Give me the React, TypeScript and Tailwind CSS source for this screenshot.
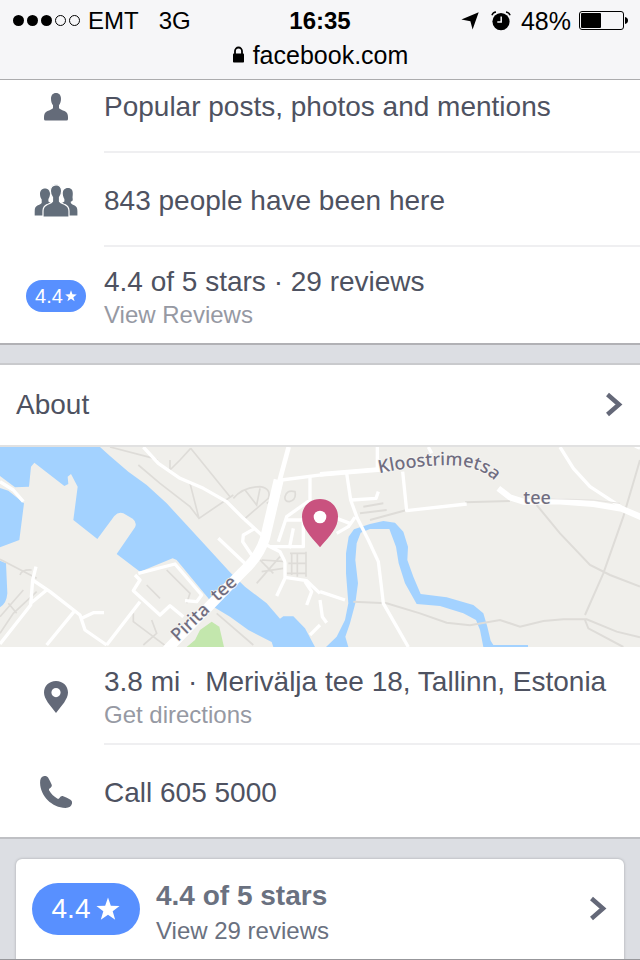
import type { ReactNode } from "react";

function StatusBar() {
  return (
    <header className="shrink-0 h-20 bg-[#f6f6f8] border-b border-[#acacae] text-black text-[25px] leading-[26px]">
      <div className="grid grid-cols-[1fr_auto_1fr] items-center h-[42px] px-3">
        <div className="flex items-center">
          <svg width="70" height="14" viewBox="0 0 70 14" aria-hidden="true">
            <circle cx="6.5" cy="6.5" r="5.5" />
            <circle cx="20.5" cy="6.5" r="5.5" />
            <circle cx="34.5" cy="6.5" r="5.5" />
            <circle cx="48.5" cy="6.5" r="5" fill="none" stroke="#000" />
            <circle cx="62.5" cy="6.5" r="5" fill="none" stroke="#000" />
          </svg>
          <span className="ml-1.5 text-2xl leading-[26px]">EMT</span>
          <span className="ml-5 text-2xl leading-[26px]">3G</span>
        </div>
        <time className="text-2xl leading-[26px] font-bold">16:35</time>
        <div className="flex items-center justify-end">
          <svg width="18" height="18" viewBox="0 0 18 18" aria-hidden="true">
            <path d="M17.7.3 11.6 17.6 9.4 9.2.4 7.6z" />
          </svg>
          <svg className="ml-3" width="20" height="20" viewBox="0 0 20 20" aria-hidden="true">
            <circle cx="10" cy="10.6" r="8.6" />
            <path d="M10.2 5.6v5.4H6.3" fill="none" stroke="#f6f6f8" strokeWidth="1.5" />
            <path d="M.9 4.2Q2 1.4 5 1.1M19.1 4.2Q18 1.4 15 1.1" fill="none" stroke="#000" strokeWidth="1.5" />
          </svg>
          <span className="ml-[10px]">48%</span>
          <svg className="ml-2" width="49" height="20" viewBox="0 0 49 20" aria-hidden="true">
            <rect x=".5" y=".5" width="44" height="18" rx="2.5" fill="none" stroke="#000" />
            <rect x="2" y="2" width="20" height="15" rx="1" />
            <path d="M46 6q3 .8 3 3.500t-3 3.500z" />
          </svg>
        </div>
      </div>
      <div className="flex items-center justify-center gap-2 h-[26px]">
        <svg width="13" height="18" viewBox="0 0 13 18" aria-hidden="true">
          <rect x="1" y="7.5" width="11" height="9" rx=".8" />
          <path d="M3 8V5a3.500 3.500 0 0 1 7 0v3" fill="none" stroke="#000" strokeWidth="1.8" />
        </svg>
        <span>facebook.com</span>
      </div>
    </header>
  );
}

function Star({ className }: { className: string }) {
  return (
    <svg className={className} viewBox="0 0 22 22" fill="#fff" aria-hidden="true">
      <path d="m11 .5 2.600 7.500 8 .2-6.300 4.900 2.300 7.700L11 16.200l-6.600 4.600 2.300-7.700L.4 8.200l8-.2z" />
    </svg>
  );
}

function PersonIcon() {
  return (
    <svg width="26" height="30" viewBox="0 0 26 30" fill="#646b79" aria-hidden="true">
      <path d="M13 1c3.300 0 5 2.300 5 5.800 0 2.900-.8 4.900-2 6.400v3c1.200 1.300 3.500 1.800 5.500 2.900 2.400 1.300 3.500 3 3.500 6V27q0 1.500-1.500 1.500h-21Q1 28.500 1 27v-1.900c0-3 1.100-4.700 3.500-6 2-1.100 4.300-1.600 5.500-2.900v-3c-1.200-1.500-2-3.500-2-6.400C8 3.300 9.700 1 13 1z" />
    </svg>
  );
}

function PeopleIcon() {
  return (
    <svg width="44" height="34" viewBox="0 0 44 34" fill="#636e7b" aria-hidden="true">
      <path d="M11 4.500c3 0 5 2.200 5 5.300 0 2.300-.8 4-1.600 5.200v2.500l5 3v11H.7v-4.300c0-3 .8-4.500 2.700-5.600 1.500-.9 3.600-1.200 4.300-2.600v-3.600C6.600 14 6 12.300 6 10c0-3.300 2-5.500 5-5.500zM34 4c-3.500 0-5.200 2.300-5.200 5.500 0 2.300.8 4.200 1.600 5.500v2.500l-5 3v11h18v-4.300c0-3-.8-4.500-2.700-5.600-1.500-.9-3.200-1.200-3.900-2.600v-1.500c2 0 2.200-1.500 1.800-3.500-.2-1 .2-2.500.2-4.500C38.800 6.300 37.500 4 34 4z" />
      <path d="M22 .8c3.800 0 5.600 2.700 5.600 6.200 0 3-.9 4.800-2.100 6.300v4c1.100 1.700 3.400 2.300 5.500 3.300 3 1.500 4 3.100 4 6.300v6.200H9v-6.200c0-3.200 1-4.800 4-6.300 2.100-1 4.400-1.600 5.500-3.300v-4c-1.200-1.500-2.100-3.300-2.100-6.300 0-3.500 1.800-6.200 5.600-6.200z" stroke="#fff" strokeWidth="1.200" />
    </svg>
  );
}

function PinIcon() {
  return (
    <svg width="26" height="34" viewBox="0 0 26 34" fill="#636978" aria-hidden="true">
      <path fillRule="evenodd" d="M13 1C6 1 1 6 1 12.600c0 3.500 1.600 6.400 3.800 9.800L13 33l8.200-10.600c2.200-3.400 3.800-6.300 3.800-9.800C25 6 20 1 13 1zm0 7a4.600 4.600 0 1 1 0 9.200A4.600 4.600 0 0 1 13 8z" />
    </svg>
  );
}

function PhoneIcon() {
  return (
    <svg width="32" height="32" viewBox="0 0 32 32" fill="#646b79" aria-hidden="true">
      <path d="M3.500.2C5.500-.2 7.300.2 8.200 1.700c1.300 2.300 2.600 4.600 3.500 7 .5 1.600-.5 2.700-1.900 3.600-1 .7-1.100 1.400-.6 2.300 1.800 3.300 4.500 6 8 8 .9.500 1.700.4 2.300-.5.900-1.500 2.100-2.500 3.700-1.900 2.400.9 5 2.100 7.300 3.500 1.400.9 1.800 2.200 1.500 3.900-.5 2.800-2.700 4.300-6.500 4.300C12 31.700.3 20 .1 7 0 3.400.8 1 3.500.2z" />
    </svg>
  );
}

function Chevron() {
  return (
    <svg width="18" height="26" viewBox="0 0 18 26" fill="none" aria-hidden="true">
      <path d="m1.500 2.500 11.500 10-11.500 10" stroke="#646878" strokeWidth="4.500" />
    </svg>
  );
}

function RatingSmall() {
  return (
    <span className="flex items-center justify-center gap-0.5 w-[60px] h-8 rounded-full bg-[#5890ff] text-white text-xl leading-8">
      4.4
      <Star className="w-3 h-3" />
    </span>
  );
}

type RowProps = { icon: ReactNode; title: string; sub?: string; last?: boolean };

function Row({ icon, title, sub, last }: RowProps) {
  return (
    <li>
      <a href="#" className="flex bg-white">
        <span className="flex items-center justify-center w-24 ml-2 pt-0.5 shrink-0">{icon}</span>
        <span
          className={`flex flex-col justify-center flex-1 box-content pt-1 ${sub ? "h-[92px]" : "h-[88px]"} ${
            last ? "" : "border-b-2 border-[#efeff1]"
          }`}
        >
          <span className="text-[28px] leading-9 text-[#4e5261]">{title}</span>
          {sub && <span className="text-2xl leading-[30px] text-[#9699a3]">{sub}</span>}
        </span>
      </a>
    </li>
  );
}

function AreaMap() {
  return (
    <svg
      className="block w-full h-[200px]"
      viewBox="0 21 1920 600"
      preserveAspectRatio="xMidYMid slice"
      role="img"
      aria-label="Map of Pirita, Tallinn"
    >
      <rect y="21" width="1920" height="600" fill="#f0efeb" />

      {/* bay, harbour and river */}
      <g fill="#a3d2ff">
        <path d="M0 21H300L330 48 385 95 440 135 500 190 560 255 620 320 690 397 735 440 800 490 840 536 850 529H880L915 565 945 621H820L815 606 745 570 690 530 640 500 625 475 530 360 518 355 420 395 350 342 405 262Q412 247 398 236L370 220Q355 215 343 228L292 297 220 240 233 140 213 102 203 110 205 132 193 138 103 68 93 80 87 140 45 142 0 108Z" />
        <path d="M0 144 25 152 72 190 58 300 0 322ZM0 362 18 370 22 460Q20 490 0 502Z" />
        <path d="M978 621 1010 590 1035 540 1045 490 1038 400 1038 340 1046 290 1062 268 1110 252 1150 243 1185 248 1210 275 1224 320 1222 360 1240 410 1262 462 1340 472 1420 495 1450 520 1462 560 1472 602 1480 615H1584V621H1450L1440 570 1428 540 1390 520 1320 498 1250 492 1215 430 1196 370 1188 320 1168 267H1110L1082 278 1070 310 1066 360 1074 430 1066 490 1050 550 1036 590 1045 621Z" />
      </g>
      <path d="M560 621 585 600 600 570 635 545 658 560 672 621Z" fill="#c3e7ad" />

      {/* paths */}
      <g fill="none" stroke="#dedcd8" strokeWidth="5">
        <path d="M330 21 450 52 472 60M572 25 540 60 510 90M510 60V90M572 25 690 170M415 75 480 130 570 200 597 235 700 165M570 130 597 235M700 175Q730 140 780 140 815 145 805 175L730 240M735 150 770 195 780 145" />
        <path d="M855 170Q860 148 885 155 890 180 868 185 853 185 855 170M840 165 800 190M0 358 110 415M60 405Q65 388 95 390M70 450 0 530M110 455 40 520 0 580M25 490 50 520M500 390 570 460 560 490M440 435 480 475M400 520V545L500 620M455 540 470 580 430 615M650 520 760 615" />
        <path d="M785 360 860 365M785 395 850 385M770 430 840 350M870 340H920M865 370H920M860 400H920M875 340V405M892 340V410M918 335V410M780 360 820 400" />
        <path d="M1060 485 1160 490 1260 520 1340 548 1410 556 1500 540 1560 560 1630 543 1690 538H1760L1850 575 1920 592M1755 540 1765 565 1870 621M1920 60 1870 230 1810 400 1755 525M1610 195 1680 280 1770 375 1830 405 1920 440M1090 200 1150 190M1080 220 1160 210M1110 240 1220 210M1395 187 1530 183" strokeWidth="6" />
      </g>

      {/* streets */}
      <g fill="none" stroke="#fff" strokeWidth="10" strokeLinejoin="round">
        <path d="M430 21 475 70 540 115 610 145 680 185 730 235 785 285M655 295 740 375M765 265 730 285 728 305 755 345M845 120 975 103 1130 88" />
        <path d="M930 110V180L860 230 835 305M860 240H910V320H810M880 265 868 325M800 315 840 335 855 365V415L830 468M855 412 920 422 960 460M915 425 935 455 920 495M960 555 930 585" />
        <path d="M415 400 525 372 605 465 590 485 555 482M405 405 420 420 400 452 480 525 510 497 550 530M420 485 320 615M108 380 98 420 150 455 240 525 255 570 320 615M98 420 92 495 0 612M92 490 140 450M222 515 140 615M245 535 280 518 312 518M0 125 40 150 70 185" />
        <path d="M1040 100 1052 180 1072 235 1105 300 1135 365 1143 430 1150 490 1190 560 1225 621M1055 180 1128 175 1135 155M1065 232 1045 260 1010 280M1010 235 1050 250M1132 21V90M1208 95 1220 212 1400 192M960 455 1035 480M960 480 967 530 980 548" />
        <path d="M1680 21 1720 85 1770 140 1870 205M1285 21 1295 40M1905 18 1920 25" />
      </g>
      <path d="M960 103 1170 86" stroke="#fff" strokeWidth="14" />
      <path d="M1495 145 1530 172 1570 185 1670 184 1780 192 1865 206 1925 232" fill="none" stroke="#fff" strokeWidth="18" strokeLinejoin="round" />
      <path d="M1615 175 1780 180 1860 190" fill="none" stroke="#e5e3e0" strokeWidth="3" />
      <path d="M866 21 838 125" stroke="#fff" strokeWidth="14" />
      <path d="M836 120 795 295Q778 350 728 395L500 630" fill="none" stroke="#fff" strokeWidth="30" />

      {/* street names */}
      <g fill="#706d80" stroke="#f6f5f3" strokeWidth="5" paintOrder="stroke" strokeLinejoin="round" fontFamily="'Noto Sans', sans-serif" fontWeight="500" fontSize="54">
        <path id="kloostrimetsa" d="M1138 100C1210 84 1330 68 1395 80S1475 112 1540 180" fill="none" stroke="none" />
        <text><textPath href="#kloostrimetsa">Kloostrimetsa</textPath></text>
        <text x="1570" y="192">tee</text>
        <text transform="translate(534 607) rotate(-44)">Pirita</text>
        <text transform="translate(652 486) rotate(-42)">tee</text>
      </g>

      {/* place marker */}
      <path fill="#c9527f" d="M960 177c-31 0-54 23-54 53 0 34 24 56 54 92 30-36 54-58 54-92 0-30-23-53-54-53z" />
      <circle cx="960" cy="231" r="19" fill="#fff" />
    </svg>
  );
}

export default function App() {
  return (
    <div className="flex flex-col h-screen overflow-hidden bg-[#dcdee3] border-b border-[#97979b] font-['Liberation_Sans',Arial,sans-serif]">
      <StatusBar />

      <main className="flex-1 min-h-0 overflow-hidden">
        {/* Page is scrolled part way into the first row */}
        <ul className="-mt-[21px] border-b-2 border-[#b1b1b5]">
          <Row icon={<PersonIcon />} title="Popular posts, photos and mentions" />
          <Row icon={<PeopleIcon />} title="843 people have been here" />
          <Row icon={<RatingSmall />} title="4.4 of 5 stars · 29 reviews" sub="View Reviews" last />
        </ul>

        <section className="mt-[18px] bg-white border-y-2 border-t-[#c9cacd] border-b-[#bfc0c4]">
          <a href="#" className="flex items-center justify-between h-[82px] px-4 border-b-2 border-[#e1e1e1]">
            <h2 className="text-[28px] leading-9 text-[#4e5261]">About</h2>
            <Chevron />
          </a>
          <AreaMap />
          <ul>
            <Row icon={<PinIcon />} title="3.8 mi · Merivälja tee 18, Tallinn, Estonia" sub="Get directions" />
            <Row icon={<PhoneIcon />} title="Call 605 5000" last />
          </ul>
        </section>

        <a href="#" className="flex items-center mx-4 mt-5 pt-3 pb-8 px-4 bg-white rounded-md shadow-[0_0_3px_rgba(0,0,0,0.25)]">
          <span className="flex items-center justify-center gap-1.5 w-[108px] h-[52px] rounded-full bg-[#5890ff] text-white text-[28px]">
            4.4
            <Star className="w-6 h-6" />
          </span>
          <span className="flex flex-col flex-1 ml-4 pt-1.5 text-[#6a7180]">
            <span className="text-[28px] leading-[38px] font-bold">4.4 of 5 stars</span>
            <span className="text-2xl leading-8">View 29 reviews</span>
          </span>
          <Chevron />
        </a>
      </main>
    </div>
  );
}
